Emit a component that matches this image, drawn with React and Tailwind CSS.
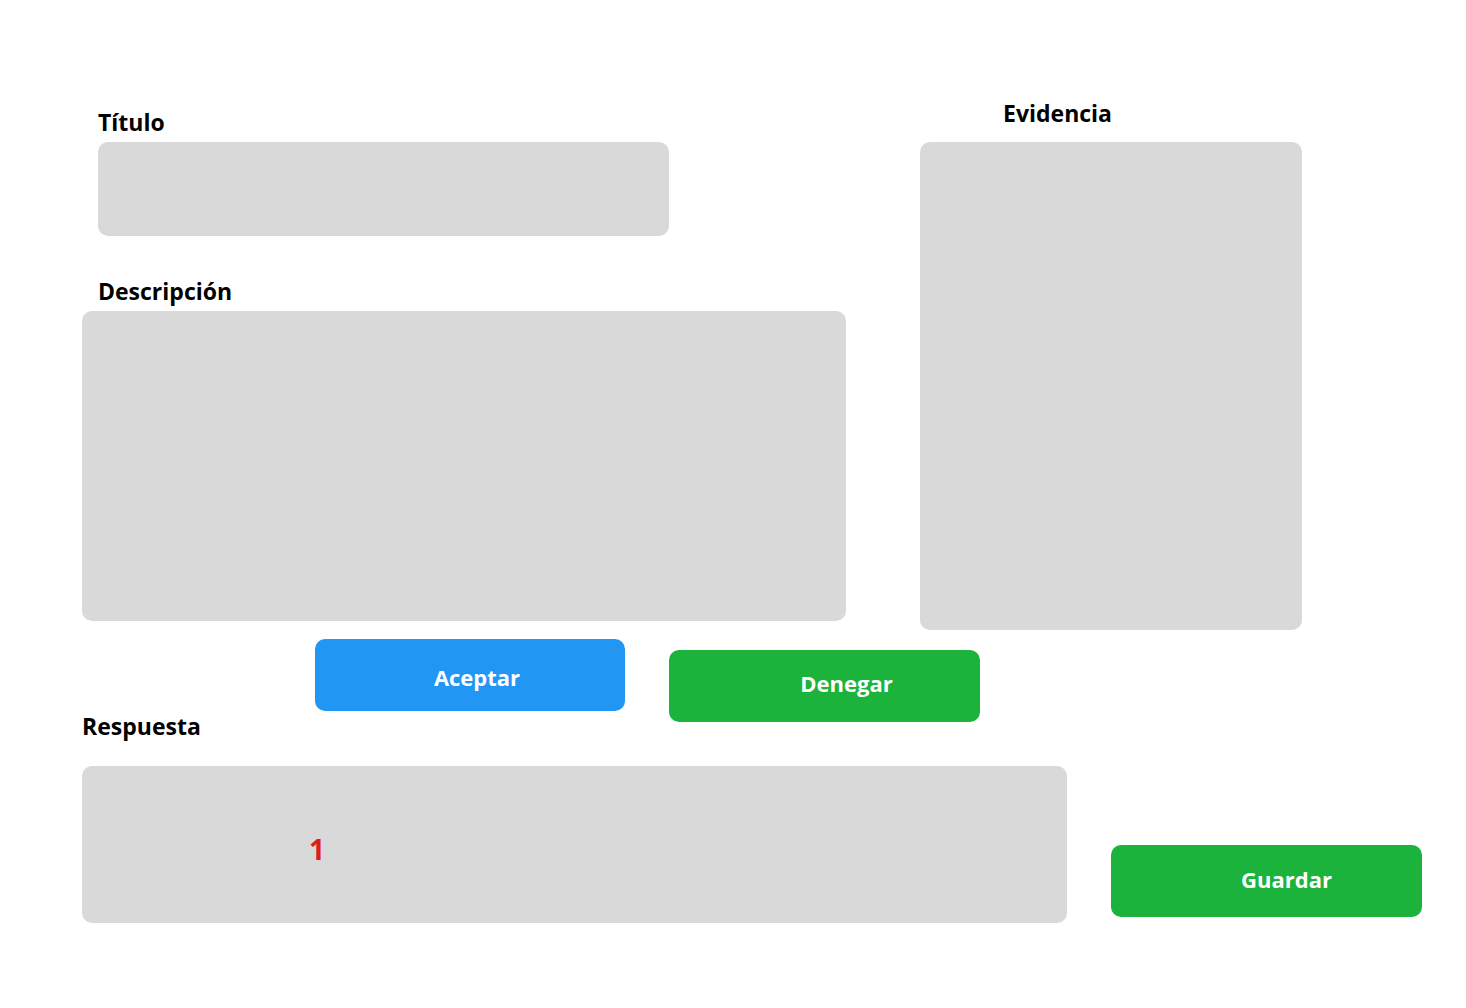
import React from "react";

const font = { fontFamily: '"Open Sans", "Noto Sans", sans-serif' };

export default function App() {
  return (
    <div
      className="w-[1466px] h-[1008px] bg-white text-black"
      style={font}
    >
      {/* top: titulo / descripcion / evidencia */}
      <div className="flex h-[630px]">
        <div className="ml-[82px] w-[764px] flex flex-col">
          <div className="ml-[16px] mt-[107px] h-[30px] text-[23px] leading-[30px] font-bold">
            Título
          </div>
          <div className="ml-[16px] mt-[5px] w-[571px] h-[94px] rounded-[10px] bg-[#d9d9d9]"></div>
          <div className="ml-[16px] mt-[40px] h-[30px] text-[23px] leading-[30px] font-bold">
            Descripción
          </div>
          <div className="mt-[5px] w-[764px] h-[310px] rounded-[10px] bg-[#d9d9d9]"></div>
        </div>
        <div className="ml-[74px] w-[382px] flex flex-col">
          <div className="ml-[83px] mt-[98px] h-[30px] text-[23px] leading-[30px] font-bold">
            Evidencia
          </div>
          <div className="mt-[14px] w-[382px] h-[488px] rounded-[10px] bg-[#d9d9d9]"></div>
        </div>
      </div>

      {/* buttons + respuesta label */}
      <div className="flex items-start h-[136px]">
        <div className="ml-[82px] w-[233px] mt-[81px] h-[30px] text-[23px] leading-[30px] font-bold">
          Respuesta
        </div>
        <button className="mt-[9px] w-[310px] h-[72px] rounded-[10px] bg-[#2196f3] text-white text-[22px] font-bold pl-[14px] pt-[4px]">
          Aceptar
        </button>
        <button className="ml-[44px] mt-[20px] w-[311px] h-[72px] rounded-[10px] bg-[#1bb33b] text-white text-[22px] font-bold pl-[44px] pb-[5px]">
          Denegar
        </button>
      </div>

      {/* respuesta + guardar */}
      <div className="flex items-start">
        <div className="ml-[82px] w-[985px] h-[157px] rounded-[10px] bg-[#d9d9d9] flex items-center">
          <span className="ml-[227px] mt-[8px] text-[28px] font-bold text-[#e01b1b]">1</span>
        </div>
        <button className="ml-[44px] mt-[79px] w-[311px] h-[72px] rounded-[10px] bg-[#1bb33b] text-white text-[22px] font-bold pl-[40px] pb-[4px]">
          Guardar
        </button>
      </div>
    </div>
  );
}
